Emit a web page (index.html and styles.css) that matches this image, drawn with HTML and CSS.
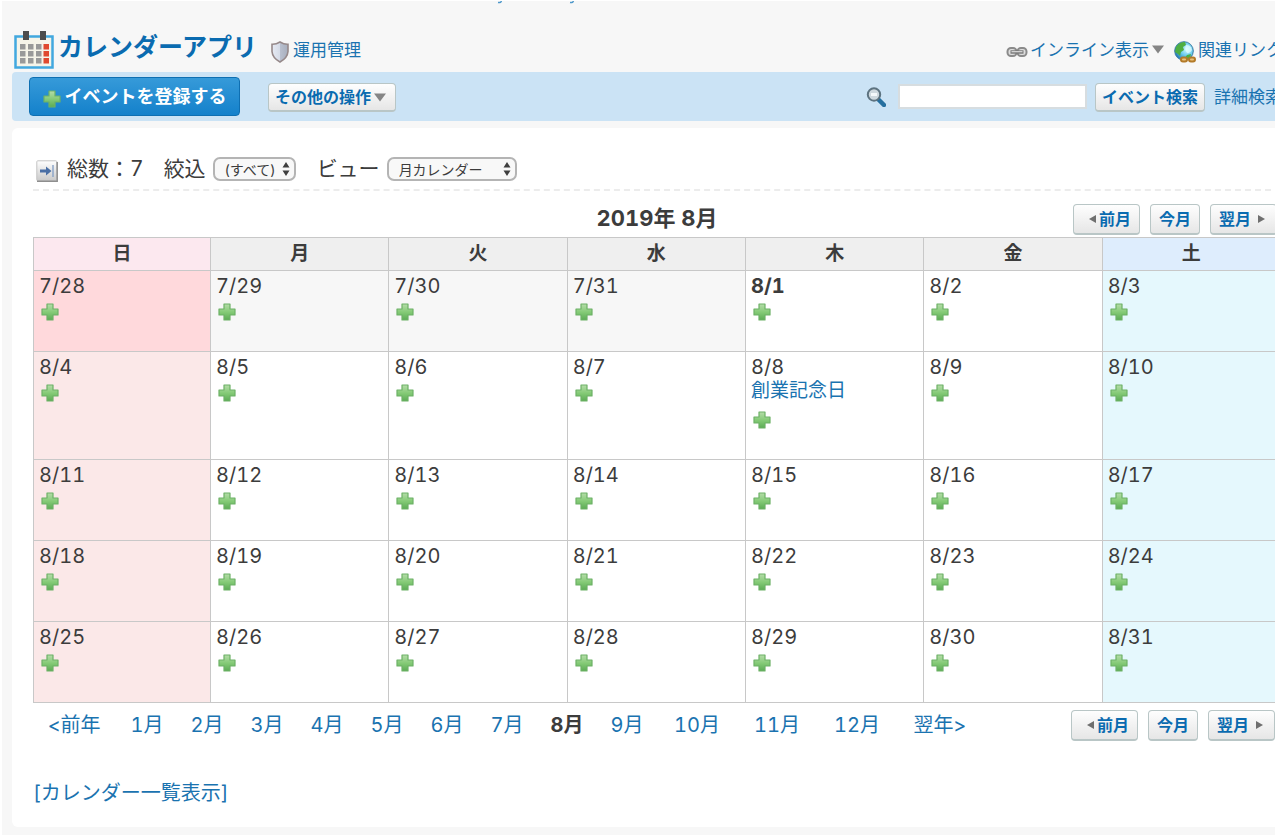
FILE: index.html
```html
<!DOCTYPE html>
<html lang="ja">
<head>
<meta charset="utf-8">
<title>カレンダーアプリ</title>
<link rel="stylesheet" href="styles.css">
</head>
<body>
<svg class="defs" aria-hidden="true">
  <defs>
    <linearGradient id="green" x1="0" y1="0" x2="0" y2="1"><stop offset="0" stop-color="#b5dca9"/><stop offset=".5" stop-color="#85cb77"/><stop offset="1" stop-color="#5cab55"/></linearGradient>
    <linearGradient id="steel" x1="0" y1="0" x2="1" y2="0"><stop offset="0" stop-color="#e6eaf3"/><stop offset=".5" stop-color="#d5dbe7"/><stop offset=".5" stop-color="#b9c0cf"/><stop offset="1" stop-color="#a7aebd"/></linearGradient>
    <radialGradient id="sea" cx=".65" cy=".4" r=".7"><stop offset="0" stop-color="#d8fbff"/><stop offset=".5" stop-color="#69cbed"/><stop offset="1" stop-color="#1b6fae"/></radialGradient>
    <linearGradient id="key" x1="0" y1="0" x2="0" y2="1"><stop offset="0" stop-color="#ffffff"/><stop offset="1" stop-color="#c9c9c9"/></linearGradient>
  </defs>
  <symbol id="plus" viewBox="0 0 18 18"><path d="M6 1h6v5h5v6h-5v5H6v-5H1V6h5z" fill="url(#green)" stroke="#6db166" stroke-width="1.200" stroke-linejoin="round"/></symbol>
  <symbol id="down" viewBox="0 0 12 9"><path d="M0 .5h12L6 8.500z" fill="#858585"/></symbol>
  <symbol id="left" viewBox="0 0 7 8"><path d="M7 0v8L0 4z" fill="#6f6f6f"/></symbol>
  <symbol id="right" viewBox="0 0 7 8"><path d="M0 0v8l7-4z" fill="#6f6f6f"/></symbol>
  <symbol id="updown" viewBox="0 0 8 14"><path d="M4 0l3.500 5.500h-7zM4 14l3.500-5.500h-7z" fill="#3f3f3f"/></symbol>
</svg>

<svg class="tails" viewBox="0 0 80 4" aria-hidden="true"><path d="M1 1.500q3 .6 3.500-2M73 1.500q3 .6 3.500-2" fill="none" stroke="#4e98ca" stroke-width="1.500"/></svg>

<div class="shell">
  <header class="head">
    <svg class="app-icon" viewBox="0 0 40 38" aria-hidden="true">
      <rect x="1.500" y="5.500" width="37" height="31" fill="#f6f4e9" stroke="#42a8df" stroke-width="2.500"/>
      <path d="M9 0h6v9H9zM26 0h6v9h-6z" fill="#4d4d4d"/>
      <path d="M6 13h5.500v5.500H6zM14 13h5.500v5.500h-5.500zM22 13h5.500v5.500h-5.500zM6 20h5.500v5.500H6zM14 20h5.500v5.500h-5.500zM22 20h5.500v5.500h-5.500zM6 27h5.500v5.500H6zM14 27h5.500v5.500h-5.500zM22 27h5.500v5.500h-5.500z" fill="#999"/>
      <path d="M29.500 13H35v5.500h-5.500zM29.500 20H35v5.500h-5.500zM29.500 27H35v5.500h-5.500z" fill="#e0492f"/>
    </svg>
    <h1 class="app-name"><a href="#">カレンダーアプリ</a></h1>
    <a class="head-link admin" href="#"><svg class="shield" viewBox="0 0 18 22" aria-hidden="true"><path d="M9 1q4 2.500 8 2.300v7.200Q16.500 17 9 21 1.500 17 1 10.500V3.300Q5 3.500 9 1z" fill="url(#steel)" stroke="#96898a" stroke-width="1.600"/></svg>運用管理</a>
    <nav class="head-nav">
      <a class="head-link" href="#"><svg class="chain" viewBox="0 0 22 12" aria-hidden="true"><g fill="#ddd" stroke="#8b8b8b" stroke-width="2"><rect x="1.500" y="2" width="9" height="8" rx="3.500"/><rect x="11.500" y="2" width="9" height="8" rx="3.500"/></g><path d="M4.500 6h13" stroke="#777" stroke-width="3.400"/><path d="M5.500 5.700h11" stroke="#ddd" stroke-width="1.200"/></svg>インライン表示<svg class="down" aria-hidden="true"><use href="#down"/></svg></a>
      <a class="head-link" href="#"><svg class="globe" viewBox="0 0 22 22" aria-hidden="true"><circle cx="10" cy="10" r="9.300" fill="url(#sea)" stroke="#3a7ca4"/><path d="M2 6q3-5 9-5l1 3-3 2 1 3-3 2-1 4-2-2-3-2zM13 14l4-1-1 4-3 2-3-1z" fill="#4fae42"/><path d="M12 4q5 0 6 5-2 4-5 3-3-4-1-8z" fill="#e4fdff" opacity=".7"/><g fill="#e9c27b" stroke="#b37a28" stroke-width="2"><rect x="7" y="16.500" width="6" height="4" rx="2"/><rect x="15" y="16.500" width="6" height="4" rx="2"/></g></svg>関連リンク</a>
    </nav>
  </header>

  <div class="toolbar">
    <button class="primary" type="button"><svg class="plus" aria-hidden="true"><use href="#plus"/></svg>イベントを登録する</button>
    <button class="btn" type="button">その他の操作<svg class="down" aria-hidden="true"><use href="#down"/></svg></button>
    <form class="search">
      <svg class="lens" viewBox="0 0 20 20" aria-hidden="true"><path d="M12 12l6 6" stroke="#256f9f" stroke-width="4.500" stroke-linecap="round"/><circle cx="8" cy="7.500" r="6.200" fill="#cfd9df" stroke="#5d7380" stroke-width="2"/><path d="M5 7.500h6" stroke="#f5f9fb" stroke-width="3"/></svg>
      <input class="query" type="text" aria-label="イベント検索">
      <button class="btn" type="button">イベント検索</button>
      <a class="detail" href="#">詳細検索</a>
    </form>
  </div>

  <main class="panel">
    <div class="filters">
      <button class="toggle" type="button" aria-label="絞り込みを開く"><svg viewBox="0 0 22 22" aria-hidden="true"><rect x=".8" y=".8" width="20" height="20" rx="1" fill="url(#key)" stroke="#c4c4c4"/><path d="M1 21.200h20.200V2" fill="none" stroke="#8e8e8e" stroke-width="1.500"/><path d="M4 9.500h6V6.500l5.500 4.500-5.500 4.500v-3H4z" fill="#4a6fa5"/><path d="M17 5v12" stroke="#8ca6c9" stroke-width="1.500"/></svg></button>
      <span class="total">総数：7</span>
      <label for="narrow">絞込</label>
      <span class="pick narrow"><select id="narrow"><option>(すべて)</option></select><svg class="updown" aria-hidden="true"><use href="#updown"/></svg></span>
      <label for="view">ビュー</label>
      <span class="pick view"><select id="view"><option>月カレンダー</option></select><svg class="updown" aria-hidden="true"><use href="#updown"/></svg></span>
    </div>

    <div class="month-head">
      <h2>2019年 8月</h2>
      <div class="steps">
        <button class="btn step" type="button"><svg class="side" aria-hidden="true"><use href="#left"/></svg>前月</button>
        <button class="btn step" type="button">今月</button>
        <button class="btn step" type="button">翌月<svg class="side" aria-hidden="true"><use href="#right"/></svg></button>
      </div>
    </div>

    <table class="calendar">
      <thead>
        <tr><th class="sun" scope="col">日</th><th scope="col">月</th><th scope="col">火</th><th scope="col">水</th><th scope="col">木</th><th scope="col">金</th><th class="sat" scope="col">土</th></tr>
      </thead>
      <tbody>
        <tr>
          <td class="other">7/28<a class="add" href="#" aria-label="登録"><svg class="plus"><use href="#plus"/></svg></a></td>
          <td class="other">7/29<a class="add" href="#" aria-label="登録"><svg class="plus"><use href="#plus"/></svg></a></td>
          <td class="other">7/30<a class="add" href="#" aria-label="登録"><svg class="plus"><use href="#plus"/></svg></a></td>
          <td class="other">7/31<a class="add" href="#" aria-label="登録"><svg class="plus"><use href="#plus"/></svg></a></td>
          <td><strong>8/1</strong><a class="add" href="#" aria-label="登録"><svg class="plus"><use href="#plus"/></svg></a></td>
          <td>8/2<a class="add" href="#" aria-label="登録"><svg class="plus"><use href="#plus"/></svg></a></td>
          <td>8/3<a class="add" href="#" aria-label="登録"><svg class="plus"><use href="#plus"/></svg></a></td>
        </tr>
        <tr class="busy">
          <td>8/4<a class="add" href="#" aria-label="登録"><svg class="plus"><use href="#plus"/></svg></a></td>
          <td>8/5<a class="add" href="#" aria-label="登録"><svg class="plus"><use href="#plus"/></svg></a></td>
          <td>8/6<a class="add" href="#" aria-label="登録"><svg class="plus"><use href="#plus"/></svg></a></td>
          <td>8/7<a class="add" href="#" aria-label="登録"><svg class="plus"><use href="#plus"/></svg></a></td>
          <td>8/8<a class="event" href="#">創業記念日</a><a class="add" href="#" aria-label="登録"><svg class="plus"><use href="#plus"/></svg></a></td>
          <td>8/9<a class="add" href="#" aria-label="登録"><svg class="plus"><use href="#plus"/></svg></a></td>
          <td>8/10<a class="add" href="#" aria-label="登録"><svg class="plus"><use href="#plus"/></svg></a></td>
        </tr>
        <tr>
          <td>8/11<a class="add" href="#" aria-label="登録"><svg class="plus"><use href="#plus"/></svg></a></td>
          <td>8/12<a class="add" href="#" aria-label="登録"><svg class="plus"><use href="#plus"/></svg></a></td>
          <td>8/13<a class="add" href="#" aria-label="登録"><svg class="plus"><use href="#plus"/></svg></a></td>
          <td>8/14<a class="add" href="#" aria-label="登録"><svg class="plus"><use href="#plus"/></svg></a></td>
          <td>8/15<a class="add" href="#" aria-label="登録"><svg class="plus"><use href="#plus"/></svg></a></td>
          <td>8/16<a class="add" href="#" aria-label="登録"><svg class="plus"><use href="#plus"/></svg></a></td>
          <td>8/17<a class="add" href="#" aria-label="登録"><svg class="plus"><use href="#plus"/></svg></a></td>
        </tr>
        <tr>
          <td>8/18<a class="add" href="#" aria-label="登録"><svg class="plus"><use href="#plus"/></svg></a></td>
          <td>8/19<a class="add" href="#" aria-label="登録"><svg class="plus"><use href="#plus"/></svg></a></td>
          <td>8/20<a class="add" href="#" aria-label="登録"><svg class="plus"><use href="#plus"/></svg></a></td>
          <td>8/21<a class="add" href="#" aria-label="登録"><svg class="plus"><use href="#plus"/></svg></a></td>
          <td>8/22<a class="add" href="#" aria-label="登録"><svg class="plus"><use href="#plus"/></svg></a></td>
          <td>8/23<a class="add" href="#" aria-label="登録"><svg class="plus"><use href="#plus"/></svg></a></td>
          <td>8/24<a class="add" href="#" aria-label="登録"><svg class="plus"><use href="#plus"/></svg></a></td>
        </tr>
        <tr>
          <td>8/25<a class="add" href="#" aria-label="登録"><svg class="plus"><use href="#plus"/></svg></a></td>
          <td>8/26<a class="add" href="#" aria-label="登録"><svg class="plus"><use href="#plus"/></svg></a></td>
          <td>8/27<a class="add" href="#" aria-label="登録"><svg class="plus"><use href="#plus"/></svg></a></td>
          <td>8/28<a class="add" href="#" aria-label="登録"><svg class="plus"><use href="#plus"/></svg></a></td>
          <td>8/29<a class="add" href="#" aria-label="登録"><svg class="plus"><use href="#plus"/></svg></a></td>
          <td>8/30<a class="add" href="#" aria-label="登録"><svg class="plus"><use href="#plus"/></svg></a></td>
          <td>8/31<a class="add" href="#" aria-label="登録"><svg class="plus"><use href="#plus"/></svg></a></td>
        </tr>
      </tbody>
    </table>

    <div class="month-foot">
      <nav class="months">
        <a class="year" href="#">&lt;前年</a><a href="#">1月</a><a href="#">2月</a><a href="#">3月</a><a href="#">4月</a><a href="#">5月</a><a href="#">6月</a><a href="#">7月</a><strong>8月</strong><a href="#">9月</a><a class="wide" href="#">10月</a><a class="wide" href="#">11月</a><a class="wide" href="#">12月</a><a class="year" href="#">翌年&gt;</a>
      </nav>
      <div class="steps">
        <button class="btn step" type="button"><svg class="side" aria-hidden="true"><use href="#left"/></svg>前月</button>
        <button class="btn step" type="button">今月</button>
        <button class="btn step" type="button">翌月<svg class="side" aria-hidden="true"><use href="#right"/></svg></button>
      </div>
    </div>

    <a class="list-link" href="#">[カレンダー一覧表示]</a>
  </main>
</div>
</body>
</html>
```

FILE: styles.css
```css
* { box-sizing: border-box; }
html { background: #f7f7f7; overflow-x: hidden; }
body {
  margin: 0;
  border-top: 1px solid #fff;
  border-left: 2px solid #fff;
  overflow-x: hidden;
  color: #3c3c3c;
  font-family: Inter, "Noto Sans CJK JP", sans-serif;
  font-size: 20px;
  line-height: 24px;
  font-variant-numeric: tabular-nums;
  white-space: nowrap;
}
a { color: #1a73b0; text-decoration: none; }
button, input, select { font-family: inherit; margin: 0; }
svg { display: block; flex: none; }
.defs { position: absolute; width: 0; height: 0; }
.tails { width: 80px; height: 4px; margin-left: 495px; }
.shell { margin: 0 -8px 0 10px; padding-bottom: 8px; }

.head { display: flex; align-items: center; height: 67px; padding: 22px 0 0 2px; }
.app-icon { width: 40px; height: 38px; }
.app-name { margin: 0 0 5px 4px; font-size: 25px; line-height: 32px; font-weight: 700; }
.app-name a { color: #0a6bb0; }
.head-link { display: flex; align-items: center; font-size: 17px; }
.admin { margin-left: 14px; }
.head-nav { display: flex; gap: 10px; margin-left: auto; }
.shield { width: 18px; height: 22px; margin: 4px 4px 0 0; }
.chain { width: 22px; height: 12px; margin: 4px 2px 0 0; }
.globe { width: 22px; height: 22px; margin: 4px 2px 0 0; }
.down { width: 12px; height: 9px; margin-left: 3px; }
.plus { width: 18px; height: 18px; }

.toolbar { display: flex; align-items: center; height: 49px; padding-left: 17px; background: #cbe3f5; border-radius: 4px; }
.primary {
  display: flex; align-items: center; justify-content: center; gap: 4px;
  width: 211px; height: 39px; margin-right: 28px; padding: 0;
  color: #fff; font-size: 18px; font-weight: 700; line-height: 24px;
  background: linear-gradient(#369ad9, #1481cb);
  border: 1px solid #0e6fb2; border-radius: 4px;
}
.primary .plus { margin-top: 4px; }
.btn {
  display: flex; align-items: center; height: 29px; padding: 0 6px;
  color: #0a6bb0; font-size: 16px; font-weight: 700; line-height: 24px;
  background: linear-gradient(#fefefe, #e6e6e6);
  border: 1px solid #b9c6c6; border-bottom-width: 2px; border-radius: 4px;
}
.toolbar .btn { margin-top: 2px; }
.toolbar > .btn { padding-right: 9px; }
.search { display: flex; align-items: center; margin: 0 1px 0 auto; }
.lens { width: 20px; height: 20px; margin-right: 12px; }
.query { width: 189px; height: 25px; margin-right: 8px; background: #fff; border: 2px solid #d7dde0; }
.detail { margin-left: 9px; font-size: 17px; }

.panel { margin-top: 7px; padding: 23px 2px 22px 21px; background: #fff; border-radius: 6px; }
.filters { display: flex; align-items: center; height: 40px; padding: 2px 0 4px 3px; border-bottom: 2px dashed #ececec; font-size: 21px; }
.toggle { width: 22px; height: 22px; margin: 4px 9px 0 0; padding: 0; border: 0; background: none; }
.total { margin-right: 20px; }
.pick { position: relative; margin: 0 21px 0 7px; }
.pick select {
  appearance: none; display: block; width: 100%; height: 24px; padding: 2px 10px 0;
  color: #3c3c3c; font-size: 14px; line-height: 18px;
  background: #f8f8f8; border: 2px solid #b4b4b4; border-radius: 7px;
}
.narrow { width: 83px; }
.view { width: 130px; }
.updown { position: absolute; right: 6px; top: 5px; width: 8px; height: 14px; }

.month-head { display: grid; grid-template-columns: 1fr auto 1fr; align-items: center; height: 46px; padding-top: 10px; }
.month-head h2 { grid-column: 2; margin: 0 0 2px; font-size: 22px; line-height: 24px; }
.steps { display: flex; justify-content: flex-end; gap: 10px; padding-right: 4px; }
.step { height: 31px; padding: 0 8px; }
.side { width: 7px; height: 8px; }
.step .side:first-child { margin: 0 7px 0 3px; }
.step .side:last-child { margin: 0 3px 0 7px; }

.calendar { width: 100%; table-layout: fixed; border-collapse: collapse; }
.calendar th, .calendar td { border: 1px solid #c8c8c8; }
.calendar th { height: 33px; padding: 0; background: #efefef; font-size: 19px; font-weight: 700; }
.calendar .sun { width: 177px; background: #fce8ef; }
.calendar .sat { background: #deedfd; }
.calendar td { height: 81px; padding: 3px 0 0 5px; vertical-align: top; }
.calendar .busy td { height: 108px; }
.calendar .other { background: #f7f7f7; }
.calendar td:first-child { background: #fbe8e8; }
.calendar td.other:first-child { background: #ffd9dc; }
.calendar td:last-child { background: #e5f8fd; }
.add { display: block; width: 18px; margin: 5px 0 0 2px; }
.event { display: block; margin-bottom: 8px; font-size: 19px; }

.month-foot { display: flex; justify-content: space-between; align-items: center; height: 44px; }
.months { display: flex; margin-left: -2px; text-align: center; }
.months a, .months strong { width: 60px; }
.months .wide { width: 80px; }
.months .year { width: 86px; }
.month-foot .steps { padding-right: 6px; }
.list-link { display: inline-block; margin-top: 34px; }
```
